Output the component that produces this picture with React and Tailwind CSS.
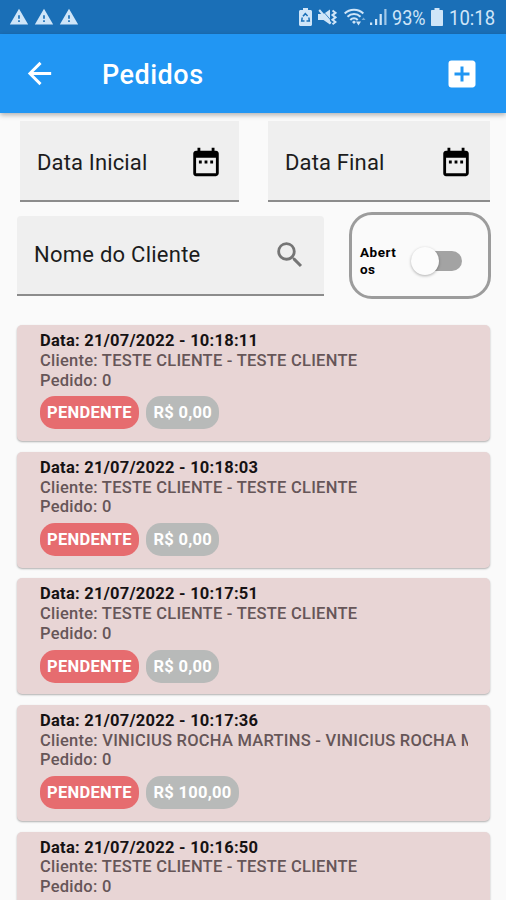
import { MdAddBox, MdArrowBack, MdDateRange, MdSearch, MdWarning } from 'react-icons/md';

const orders = [
  { date: '21/07/2022 - 10:18:11', client: 'TESTE CLIENTE - TESTE CLIENTE', number: 0, total: 'R$ 0,00' },
  { date: '21/07/2022 - 10:18:03', client: 'TESTE CLIENTE - TESTE CLIENTE', number: 0, total: 'R$ 0,00' },
  { date: '21/07/2022 - 10:17:51', client: 'TESTE CLIENTE - TESTE CLIENTE', number: 0, total: 'R$ 0,00' },
  { date: '21/07/2022 - 10:17:36', client: 'VINICIUS ROCHA MARTINS - VINICIUS ROCHA M', number: 0, total: 'R$ 100,00' },
  { date: '21/07/2022 - 10:16:50', client: 'TESTE CLIENTE - TESTE CLIENTE', number: 0, total: 'R$ 0,00' },
];

function BatteryRecycleIcon() {
  return (
    <svg width="13" height="18" viewBox="0 0 13 18" className="shrink-0">
      <path fill="currentColor" d="M4 0h5v2h2.500c.8 0 1.500.7 1.500 1.500v13c0 .8-.7 1.500-1.500 1.500h-10C.7 18 0 17.300 0 16.500v-13C0 2.700.7 2 1.500 2H4z" />
      <path d="M4 8.300 6.300 5.700 8.600 8M9.900 9.500l.4 3.500H7.500M5.500 13H2.700l.5-3.500" fill="none" stroke="#1a6fb7" strokeWidth="1.500" />
    </svg>
  );
}

function MuteVibrateIcon() {
  return (
    <svg width="19" height="18" viewBox="0 0 19 18" className="shrink-0">
      <path fill="currentColor" d="M0 6h5.500L12 1.500v15L5.500 12H0z" />
      <path d="M3.500 1.500 13.500 13" stroke="#1a6fb7" strokeWidth=".8" />
      <path d="M1.200 2 12.800 15.500" stroke="currentColor" strokeWidth="2" />
      <path d="m14.500 2.500 3 2.300-3 2.300 3 2.300-3 2.300 3 2.300-3 2.300" fill="none" stroke="currentColor" strokeWidth="2" />
    </svg>
  );
}

function WifiIcon() {
  return (
    <svg width="22" height="18" viewBox="0 0 22 18" className="shrink-0">
      <g fill="none" stroke="currentColor" strokeWidth="2">
        <path d="M.7 5.500C5.500.4 14.500.4 19.300 5.500" />
        <path d="M3.500 8.800c3.600-3.700 9.400-3.700 13 0" />
        <path d="M6.300 12c2.100-2.200 5.300-2.200 7.400 0" />
      </g>
      <path fill="currentColor" d="m10 12.500-2 1.500 2 2 2-2z" />
      <path fill="currentColor" d="M12 13.500h5l-2.500 4z" />
      <path fill="currentColor" opacity=".5" d="m19.500 9.500 2 2.500h-4z" />
    </svg>
  );
}

function SignalIcon() {
  return (
    <svg width="17" height="18" viewBox="0 0 17 18" className="shrink-0" fill="currentColor">
      <path d="M0 14.500h2.200V17H0zM5 11h2.200v6H5zM9.600 6h2.200v11H9.600z" />
      <path opacity=".75" d="M14.300 1h2.200v16h-2.200z" />
    </svg>
  );
}

function BatteryIcon() {
  return (
    <svg width="12" height="18" viewBox="0 0 12 18" className="shrink-0" fill="currentColor">
      <path d="M3.500 0h5v2H11c.6 0 1 .4 1 1v14c0 .6-.4 1-1 1H1c-.6 0-1-.4-1-1V3c0-.6.4-1 1-1h2.500z" />
    </svg>
  );
}

function StatusBar() {
  return (
    <div className="flex h-[34px] shrink-0 items-center bg-[#1a6fb7] pl-[9px] text-[#cfe5f8]">
      <div className="flex gap-[5px]">
        <MdWarning size={20} />
        <MdWarning size={20} />
        <MdWarning size={20} />
      </div>
      <div className="ml-auto flex w-[207px] items-center">
        <BatteryRecycleIcon />
        <div className="ml-[6px] flex"><MuteVibrateIcon /></div>
        <div className="ml-[7px] flex"><WifiIcon /></div>
        <div className="ml-[4px] flex"><SignalIcon /></div>
        <div className="ml-[5px] w-[34px] pt-px text-[21px] leading-[34px]">
          <span className="inline-block origin-left scale-x-[.86]">93%</span>
        </div>
        <div className="ml-[5px] flex"><BatteryIcon /></div>
        <div className="ml-[6px] w-[50px] pt-px text-[21px] leading-[34px]">
          <span className="inline-block origin-left scale-x-[.88]">10:18</span>
        </div>
      </div>
    </div>
  );
}

function AppBar() {
  return (
    <header className="relative z-10 flex h-[79px] shrink-0 items-center bg-[#2196f3] pl-[22px] pr-[26px] text-white shadow-[0_2px_5px_rgba(0,0,0,0.3)]">
      <MdArrowBack size={35} />
      <h1 className="ml-[45px] pt-[4px] text-[27px] font-medium tracking-[0.500px]">Pedidos</h1>
      <MdAddBox size={36} className="ml-auto" />
    </header>
  );
}

function DateField({ label, className }) {
  return (
    <div className={`flex h-[81px] items-center justify-between border-b-2 border-[#8c8c8c] bg-[#efefef] pt-[3px] ${className}`}>
      <span className="text-[22px] tracking-[0.150px] text-[#1c1c1c]">{label}</span>
      <MdDateRange size={34} className="text-black" />
    </div>
  );
}

function Filters() {
  return (
    <div className="shrink-0 pl-[17px] pr-[15px]">
      <div className="flex justify-between pl-[3px] pt-[8px]">
        <DateField label="Data Inicial" className="w-[219px] pl-[17px] pr-[16px]" />
        <DateField label="Data Final" className="mr-px w-[222px] pl-[17px] pr-[17px]" />
      </div>
      <div className="mt-[10px] flex items-center justify-between">
        <div className="flex h-[80px] w-[307px] items-center justify-between rounded-t border-b-2 border-[#8c8c8c] bg-[#efefef] pl-[17px] pr-[17px]">
          <span className="text-[22px] tracking-[0.250px] text-[#1c1c1c]">Nome do Cliente</span>
          <MdSearch size={34} className="text-[#757575]" />
        </div>
        <div className="flex h-[87px] w-[142px] items-center rounded-[23px] border-[3px] border-[#9c9c9c] pl-[8px] pt-[11px]">
          <span className="w-[42px] break-all text-[13.500px] font-bold leading-[17px] tracking-[0.500px] text-black">Abertos</span>
          <button className="relative ml-[18px] h-[20px] w-[42px] rounded-full bg-[#a3a3a3]">
            <span className="absolute -left-[9px] -top-[4px] size-[28px] rounded-full bg-[#fcfcfc] shadow-[0_1px_3px_rgba(0,0,0,0.3)]" />
          </button>
        </div>
      </div>
    </div>
  );
}

function OrderCard({ order }) {
  return (
    <div className="h-[116px] shrink-0 rounded-[5px] bg-[#e8d5d5] pl-[23px] pr-[22px] pt-[6px] text-[16.500px] font-medium leading-[19.700px] tracking-[0.250px] text-[#665658] shadow-[0_1px_2px_rgba(0,0,0,0.3)]">
      <p className="font-bold text-[#161213]">Data: {order.date}</p>
      <p className="overflow-hidden whitespace-nowrap">Cliente: {order.client}</p>
      <p>Pedido: {order.number}</p>
      <div className="mt-[6px] flex gap-[7px] font-bold leading-[33px] tracking-[0.300px] text-white">
        <span className="rounded-[15px] bg-[#e66c6f] pl-[7px] pr-[7.500px]">PENDENTE</span>
        <span className="rounded-[15px] bg-[#b8bab9] px-[7px]">{order.total}</span>
      </div>
    </div>
  );
}

export default function App() {
  return (
    <div className="flex h-[900px] w-[506px] flex-col overflow-hidden bg-[#fafafa] font-['Roboto',sans-serif]">
      <StatusBar />
      <AppBar />
      <Filters />
      <main className="mt-[26.300px] flex flex-col gap-[10.600px] pl-[17px] pr-[16px]">
        {orders.map(order => (
          <OrderCard key={order.date} order={order} />
        ))}
      </main>
    </div>
  );
}
